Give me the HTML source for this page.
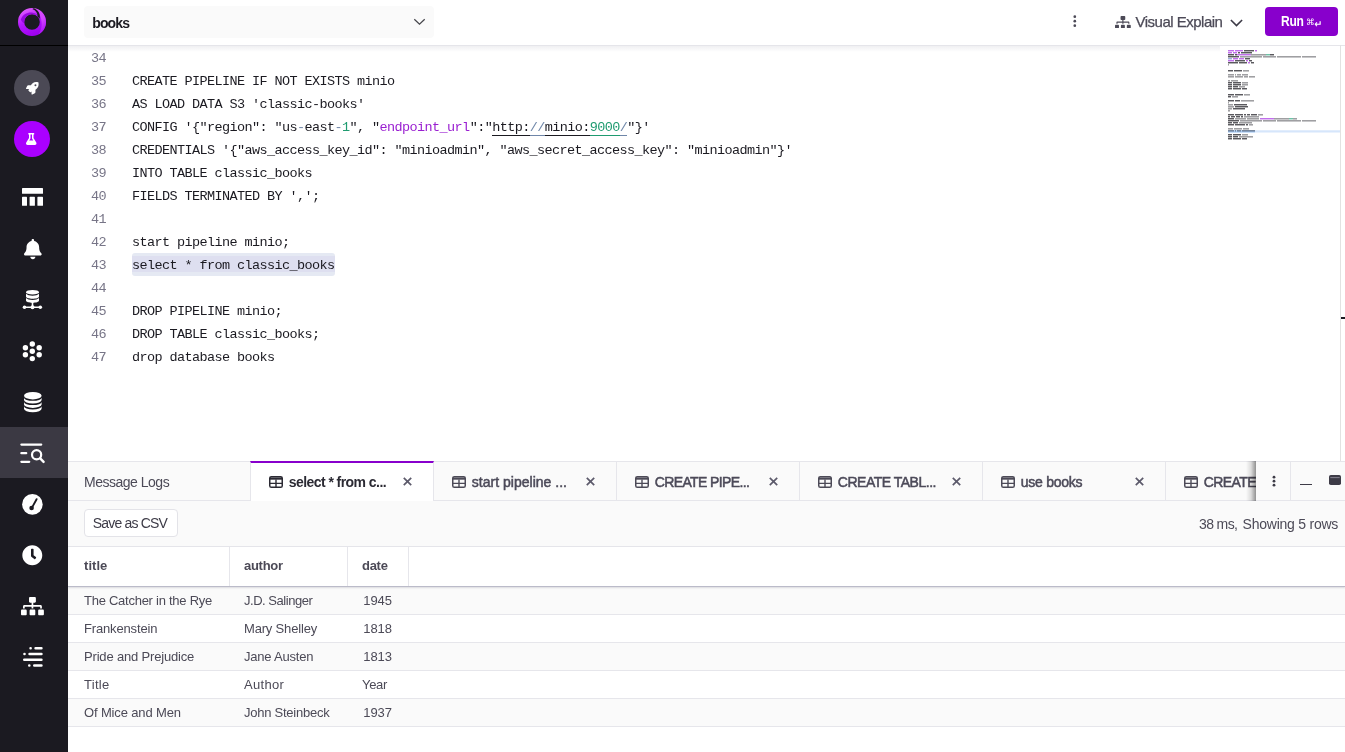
<!DOCTYPE html>
<html lang="en">
<head>
<meta charset="utf-8">
<title>SQL Editor</title>
<style>
*{box-sizing:border-box;margin:0;padding:0}
html,body{width:1345px;height:752px;overflow:hidden;background:#fff}
body{font-family:"Liberation Sans",sans-serif;font-size:14px;color:#4c4a57;position:relative}
.abs{position:absolute}
/* sidebar */
#side{will-change:transform;position:absolute;left:0;top:0;width:68px;height:752px;background:#1b1a21}
#side .logo{position:absolute;left:0;top:0;width:68px;height:46px;border-bottom:1px solid #000}
#side .circ{position:absolute;left:14px;width:36px;height:36px;border-radius:50%}
#side .act{position:absolute;left:0;top:427px;width:68px;height:51px;background:#3b3943}
#side svg{position:absolute;overflow:visible}
/* topbar */
#top{will-change:transform;position:absolute;left:68px;top:0;width:1277px;height:45px;background:#fff;z-index:5}
#sel{position:absolute;left:16px;top:6px;width:350px;height:32px;background:#fafafa;border-radius:4px}
#sel span{position:absolute;left:8.3px;top:.7px;line-height:32px;font-weight:bold;color:#1b1a21;font-size:14px;letter-spacing:-.89px}
#run{position:absolute;left:1197px;top:7px;width:73px;height:29px;background:#8800cc;border-radius:4px;color:#fff}
/* editor */
#ed{will-change:transform;position:absolute;left:68px;top:45px;width:1277px;height:416px;background:#fff;font-family:"Liberation Mono",monospace;font-size:13.5px;letter-spacing:-.6px;color:#1b1a21}
.ln{position:absolute;left:0;height:23px;line-height:23px;white-space:pre}
.ln i{position:absolute;left:23px;width:15px;text-align:right;font-style:normal;color:#777587}
.ln b{position:absolute;left:64px;font-weight:normal}
.ln s{text-decoration:none}
.hl{position:absolute;left:64px;top:208px;width:203px;height:23px;background:#e5e9f3;border-radius:3px}
.hl:after{content:"";position:absolute;left:0;top:3px;width:203px;height:16px;background:#dedff0}
.pu{color:#9a1fd1}.gr{color:#1f9b70}.bl{color:#6f86a8}
u{text-decoration:none;border-bottom:1px solid currentColor}
/* bottom */
#bot{will-change:transform;position:absolute;left:68px;top:461px;width:1277px;height:291px;background:#fff}
#tabs{position:absolute;left:0;top:0;width:1277px;height:40px;background:#fafafa;border-top:1px solid #e6e6eb;border-bottom:1px solid #e6e6eb}
.tab{position:absolute;top:0;height:38px;line-height:38px;border-right:1px solid #e6e6eb;white-space:nowrap;color:#4c4a57}
.tab .tt{color:#4c4a59;-webkit-text-stroke:.5px #4c4a59}
.tab.on{background:#fff;height:40px;top:-1px;border-top:2px solid #8800cc;border-left:1px solid #e6e6eb;color:#2b2a33}
.tab.on>*{margin-top:-1px}
.tab.on .tt{color:#2b2a33;font-weight:bold;-webkit-text-stroke:0}
#tool{position:absolute;left:0;top:40px;width:1277px;height:46px;background:#fafafa;border-bottom:1px solid #e6e6eb}
#csv{position:absolute;left:15.6px;top:8.3px;width:94.2px;height:27.4px;text-indent:-1.4px;border:1px solid #e3e3e8;border-radius:4px;background:#fff;line-height:26px;text-align:center;color:#3d3b47;letter-spacing:-.815px}
#hdr{position:absolute;left:0;top:86px;width:1277px;height:40px;background:#fff;border-bottom:1px solid #bbbbc9;box-shadow:0 1px 1.5px rgba(60,60,90,.16);z-index:2}
#hdr span{position:absolute;top:0;line-height:38px;font-weight:bold;color:#4c4a57;font-size:13px}
#hdr em{position:absolute;top:0;width:1px;height:39px;background:#e6e6eb}
.row{position:absolute;left:0;width:1277px;height:28px;border-bottom:1px solid #e6e6eb;line-height:27px;font-size:13px;color:#4c4a57}
.row.odd{background:#fafafa}
.row span{position:absolute;top:0;white-space:nowrap}
.ti{position:absolute;left:17.7px;top:13.5px;width:14px;height:12px}
.tt{position:absolute;left:37.7px;top:.8px}
.tx{position:absolute;left:151.500px;top:15.300px;width:9px;height:9px}
#tend{position:absolute;left:1188px;top:0;width:90px;height:38px;background:#fafafa}
#tsh{position:absolute;left:1178px;top:-1px;width:10px;height:40px;background:linear-gradient(90deg,rgba(0,0,0,0),rgba(0,0,0,.12) 50%,rgba(0,0,0,.42))}
.st{position:absolute;top:.5px;line-height:45px;color:#4c4a57;white-space:pre}
#vex{-webkit-text-stroke:.25px #4c4a57;position:absolute;left:1067.500px;top:0;line-height:43px;font-size:15px;letter-spacing:-.5px;color:#4c4a57;white-space:nowrap}
#run span{position:absolute;white-space:nowrap}
#run .r1{left:15.700px;top:-.4px;line-height:28px;font-weight:bold;font-size:14px;letter-spacing:-.3px;transform:scaleX(.86);transform-origin:0 50%}
#run .r2{left:41px;top:.7px;line-height:29px;font-family:"DejaVu Sans",sans-serif;font-size:8.500px}
#run .r3{left:49.500px;top:2px;line-height:29px;font-family:"DejaVu Sans",sans-serif;font-size:9.500px;font-weight:bold}
#sh1{position:absolute;left:0;top:0;width:1277px;height:1px;background:#e5e5ea}
#sh2{position:absolute;left:0;top:1px;width:1152px;height:6px;background:linear-gradient(rgba(30,30,60,.066),rgba(30,30,60,0))}
#vr{position:absolute;z-index:6;left:1272px;top:0;width:1px;height:416px;background:#e2e2e2}
#vm{position:absolute;left:1273px;top:272px;width:4px;height:2px;background:#1b1a21}
</style>
</head>
<body>
<svg width="0" height="0" style="position:absolute"><defs>
<g id="tbl"><rect x=".75" y=".75" width="12.5" height="10.5" rx="1.6" fill="none" stroke="currentColor" stroke-width="1.5"/><path d="M.75 1.5h12.5v2.2H.75z" fill="currentColor"/><path d="M.75 7.4h12.5M7 3.5v7.8" stroke="currentColor" stroke-width="1.4" fill="none"/></g>
<g id="xx"><path d="M.7.7l6.6 6.6M7.3.7L.7 7.3" stroke="#5c5a6b" stroke-width="1.5" fill="none"/></g>
</defs></svg>
<div id="side">
  <div class="logo"></div>
  <svg style="left:12px;top:2px" width="40" height="40" viewBox="0 0 40 40">
    <defs>
      <linearGradient id="lg1" x1="0.15" y1="0.1" x2="0.55" y2="1"><stop offset="0" stop-color="#e05cff"/><stop offset=".45" stop-color="#b417ff"/><stop offset="1" stop-color="#9d00ee"/></linearGradient>
      <linearGradient id="lg2" x1="0.3" y1="0" x2="0.7" y2="1"><stop offset="0" stop-color="#dc50ff"/><stop offset=".5" stop-color="#d64bff"/><stop offset="1" stop-color="#a80af5"/></linearGradient>
    </defs>
    <path fill-rule="evenodd" fill="url(#lg1)" d="M20 6a14 14 0 1 0 0 28a14 14 0 1 0 0-28zM20 12.200a7.800 7.800 0 1 1 0 15.600a7.800 7.800 0 1 1 0-15.600z"/>
    <path fill="url(#lg2)" d="M22.6 6.2C29.2 7.4 34 13.100 34 20c0 5.500-3.100 10.200-7.700 12.500c2.400-2.600 3.400-6.200 3.400-10.500c0-6.500-2.500-12.200-7.100-15.800z" opacity=".9"/>
    <path fill="#8f00dc" d="M8.800 17.800C10.500 12.600 15.200 10.100 20.800 10.700c2.700.3 5 1.700 6.300 4.100c-2-2-4.300-2.600-7.100-2.500c-4.300.1-7.500 3.300-7.700 7.700c-.1 2-1.800.7-3.500-2.200z" opacity=".85"/>
    <path fill="#1b1a21" d="M21.600 6.200C25.800 7.400 28.700 11.400 27.700 16.800L25.600 14.600C25.500 11.200 23.900 8.600 20.400 7.100z"/>
  </svg>
  <div class="circ" style="top:70px;background:#4b4955"></div>
  <svg style="left:26px;top:82px" width="12.6" height="12.6" viewBox="0 0 512 512" fill="#fff"><path d="M505.12019,19.09375c-1.18945-5.53125-6.65819-11-12.207-12.1875C460.716,0,435.507,0,410.40747,0,307.17523,0,245.26909,55.20312,199.05238,128H94.83772c-16.34763.01562-35.55658,11.875-42.88664,26.48438L2.51562,253.29688A28.4,28.4,0,0,0,0,264a24.00867,24.00867,0,0,0,24.00582,24H127.81618l-22.47457,22.46875c-11.36521,11.36133-12.99607,32.25781,0,45.25L156.24582,406.625c11.15623,11.1875,32.15619,13.15625,45.27726,0l22.47457-22.46875V488a24.00867,24.00867,0,0,0,24.00581,24,28.55934,28.55934,0,0,0,10.707-2.51562l98.72834-49.39063c14.62888-7.29687,26.50776-26.5,26.50776-42.85937V312.79688c72.59753-46.3125,128.03493-108.40626,128.03493-211.09376C512.07526,76.5,512.07526,51.29688,505.12019,19.09375ZM384.04033,168A40,40,0,1,1,424.05,128,40.02322,40.02322,0,0,1,384.04033,168Z"/></svg>
  <div class="circ" style="top:121px;background:#aa00ff"></div>
  <svg style="left:26.3px;top:133px" width="10.5" height="12" viewBox="0 0 448 512" fill="#fff"><path d="M437.2 403.5L320 215V64h8c13.3 0 24-10.7 24-24V24c0-13.3-10.7-24-24-24H120c-13.3 0-24 10.7-24 24v16c0 13.3 10.7 24 24 24h8v151L10.8 403.5C-18.5 450.6 15.3 512 70.9 512h306.2c55.7 0 89.4-61.5 60.1-108.5zM137.9 320l48.2-77.6c3.700-5.200 5.800-11.600 5.800-18.400V64h64v160c0 6.900 2.200 13.200 5.800 18.400l48.200 77.600h-172z"/></svg>
  <svg style="left:22.400px;top:188px" width="21" height="18" viewBox="0 0 21 18" fill="#fff"><rect x="0" y="0" width="21" height="5.800" rx=".6"/><rect x="0" y="8.800" width="5" height="9" rx=".6"/><rect x="7.600" y="8.800" width="5.300" height="9" rx=".6"/><rect x="15.400" y="8.800" width="5.600" height="9" rx=".6"/></svg>
  <svg style="left:23.700px;top:238.800px" width="17.700" height="20.200" viewBox="0 0 448 512" fill="#fff"><path d="M224 512c35.320 0 63.970-28.650 63.970-64H160.030c0 35.350 28.650 64 63.970 64zm215.390-149.710c-19.320-20.760-55.470-51.990-55.470-154.290 0-77.700-54.480-139.900-127.940-155.160V32c0-17.670-14.320-32-31.980-32s-31.980 14.330-31.980 32v20.840C118.560 68.100 64.080 130.300 64.080 208c0 102.300-36.150 133.530-55.470 154.290-6 6.450-8.660 14.160-8.610 21.710.110 16.400 12.980 32 32.100 32h383.800c19.120 0 32-15.600 32.100-32 .050-7.550-2.610-15.270-8.610-21.710z"/></svg>
  <svg style="left:22px;top:289px" width="21" height="22" viewBox="0 0 21 22" fill="#fff">
    <ellipse cx="10.500" cy="3.200" rx="6.500" ry="2.300"/>
    <path d="M4 4.800c1.200 1.300 3.600 1.900 6.500 1.900s5.300-.6 6.500-1.900v2.600c0 1.300-2.900 2.300-6.500 2.300S4 8.700 4 7.400z"/>
    <path d="M4 9c1.200 1.300 3.600 1.900 6.500 1.900S15.800 10.300 17 9v2.600c0 1.300-2.900 2.300-6.500 2.300S4 12.900 4 11.600z"/>
    <rect x="9.700" y="13" width="1.600" height="4"/><rect x="2.500" y="17.500" width="16" height="1.500"/>
    <circle cx="2.500" cy="18.300" r="1.800"/><circle cx="10.500" cy="18.300" r="2"/><circle cx="18.300" cy="18.300" r="1.800"/>
  </svg>
  <svg style="left:22px;top:341px" width="20.600" height="20.600" viewBox="-10.300 -10.300 20.600 20.600" fill="#fff">
    <circle r="2.700"/><circle cy="-7.300" r="2.700"/><circle cy="7.300" r="2.700"/><circle cx="6.900" cy="-3.500" r="2.700"/><circle cx="6.900" cy="3.500" r="2.700"/><circle cx="-6.900" cy="-3.500" r="2.700"/><circle cx="-6.900" cy="3.500" r="2.700"/>
  </svg>
  <svg style="left:23.700px;top:391.700px" width="17.600" height="20.600" viewBox="0 0 17.600 20.600" fill="#fff"><ellipse cx="8.800" cy="3.700" rx="8.800" ry="3.700"/><path d="M0 5.700A8.800 3.100 0 0 0 17.600 5.700V8.100A8.800 3.500 0 0 1 0 8.100z"/><path d="M0 10A8.800 3.100 0 0 0 17.600 10V12.400A8.800 3.500 0 0 1 0 12.400z"/><path d="M0 14.300A8.800 3.100 0 0 0 17.600 14.300V16.700A8.800 3.500 0 0 1 0 16.700z"/></svg>
  <div class="act"></div>
  <svg style="left:20px;top:443px" width="25" height="21" viewBox="0 0 25 21" fill="none" stroke="#fff" stroke-width="2.300" stroke-linecap="round">
    <path d="M1.400 1.600H21.200M1.400 10.200H6.200M1.400 18.800H9.200"/><circle cx="16.600" cy="11.800" r="4.600" stroke-width="2.200"/><path d="M20.200 15.400L23.600 18.900" stroke-width="2.400"/>
  </svg>
  <svg style="left:22px;top:493.700px" width="20.800" height="20.800" viewBox="0 0 20.800 20.800"><circle cx="10.400" cy="10.400" r="10.300" fill="#fff"/><path d="M14.600 5.200L10 13.600" stroke="#1b1a21" stroke-width="1.900" stroke-linecap="round"/><circle cx="9.600" cy="14" r="2.300" fill="#1b1a21"/></svg>
  <svg style="left:22.100px;top:544.700px" width="20.600" height="20.600" viewBox="0 0 512 512" fill="#fff"><path d="M256,8C119,8,8,119,8,256S119,504,256,504,504,393,504,256,393,8,256,8Zm92.490,313h0l-20,25a16,16,0,0,1-22.490,2.500h0l-67-49.720a40,40,0,0,1-15-31.230V112a16,16,0,0,1,16-16h32a16,16,0,0,1,16,16V256l58,42.500A16,16,0,0,1,348.490,321Z"/></svg>
  <svg style="left:21px;top:597px" width="22.900" height="18.300" viewBox="0 0 640 512" fill="#fff"><path d="M128 352H32c-17.670 0-32 14.330-32 32v96c0 17.670 14.330 32 32 32h96c17.670 0 32-14.330 32-32v-96c0-17.670-14.330-32-32-32zm-24-80h192v48h48v-48h192v48h48v-57.590c0-21.170-17.230-38.410-38.410-38.410H344v-64h40c17.670 0 32-14.330 32-32V32c0-17.670-14.330-32-32-32H256c-17.670 0-32 14.330-32 32v96c0 17.670 14.330 32 32 32h40v64H94.410C73.230 224 56 241.230 56 262.410V320h48v-48zm264 80h-96c-17.670 0-32 14.330-32 32v96c0 17.670 14.330 32 32 32h96c17.670 0 32-14.330 32-32v-96c0-17.670-14.330-32-32-32zm240 0h-96c-17.670 0-32 14.330-32 32v96c0 17.670 14.330 32 32 32h96c17.670 0 32-14.330 32-32v-96c0-17.670-14.330-32-32-32z"/></svg>
  <svg style="left:22px;top:646px" width="21" height="22" viewBox="0 0 21 22" fill="none" stroke="#fff" stroke-width="2.600" stroke-linecap="round">
    <path d="M8.600 2.300h.01M13.600 2.300H19.400M2.500 8h.01M7.600 8H19.400M2.300 13.800H19.400M7.300 19.500h.01M12.300 19.500H19.400"/>
  </svg>
</div>

<div id="top">
  <div id="sel"><span>books</span><svg style="position:absolute;left:329px;top:11.500px" width="13" height="8" viewBox="0 0 13 8"><path d="M1.300 1.200L6.500 6.200L11.700 1.200" fill="none" stroke="#46464c" stroke-width="1.250"/></svg></div>
  <svg style="position:absolute;left:1005px;top:15px" width="4" height="13" viewBox="0 0 4 13" fill="#4c4a57"><circle cx="1.800" cy="1.700" r="1.350"/><circle cx="1.800" cy="6.200" r="1.350"/><circle cx="1.800" cy="10.700" r="1.350"/></svg>
  <svg style="position:absolute;left:1046.800px;top:15.800px" width="15.800" height="12.600" viewBox="0 0 640 512" fill="#4c4a57"><path d="M128 352H32c-17.670 0-32 14.330-32 32v96c0 17.670 14.330 32 32 32h96c17.670 0 32-14.330 32-32v-96c0-17.670-14.330-32-32-32zm-24-80h192v48h48v-48h192v48h48v-57.590c0-21.170-17.230-38.410-38.410-38.410H344v-64h40c17.670 0 32-14.330 32-32V32c0-17.670-14.330-32-32-32H256c-17.670 0-32 14.330-32 32v96c0 17.670 14.330 32 32 32h40v64H94.410C73.230 224 56 241.230 56 262.410V320h48v-48zm264 80h-96c-17.670 0-32 14.330-32 32v96c0 17.670 14.330 32 32 32h96c17.670 0 32-14.330 32-32v-96c0-17.670-14.330-32-32-32zm240 0h-96c-17.670 0-32 14.330-32 32v96c0 17.670 14.330 32 32 32h96c17.670 0 32-14.330 32-32v-96c0-17.670-14.330-32-32-32z"/></svg>
  <span id="vex">Visual Explain</span>
  <svg style="position:absolute;left:1161.500px;top:19px" width="13" height="8" viewBox="0 0 13 8"><path d="M.900 1L6.500 6.600L12.100 1" fill="none" stroke="#3d3b47" stroke-width="1.600"/></svg>
  <div id="run"><span class="r1">Run</span><span class="r2">&#8984;</span><span class="r3">&#8629;</span></div>
</div>

<div id="ed">
<svg id="mm" style="position:absolute;left:1160px;top:0;z-index:7" width="112" height="120" viewBox="0 0 112 120">
<rect x="0" y="85.300" width="112" height="2.200" fill="#d6e6fb"/><rect x="0" y="85.300" width="27" height="2.200" fill="#a9cbf3"/>
<rect x="0" y="5.1" width="6" height="1.300" fill="#a22be0" opacity="0.75"/>
<rect x="7" y="5.1" width="8" height="1.300" fill="#a22be0" opacity="0.75"/>
<rect x="16" y="5.1" width="10" height="1.300" fill="#1b1a21" opacity="0.8"/>
<rect x="27" y="5.1" width="2" height="1.300" fill="#a22be0" opacity="0.75"/>
<rect x="0" y="7.1" width="4" height="1.300" fill="#a22be0" opacity="0.75"/>
<rect x="5" y="7.1" width="4" height="1.300" fill="#a22be0" opacity="0.75"/>
<rect x="10" y="7.1" width="2" height="1.300" fill="#1b1a21" opacity="0.8"/>
<rect x="13" y="7.1" width="11" height="1.300" fill="#1b1a21" opacity="0.8"/>
<rect x="0" y="9.1" width="6" height="1.300" fill="#1b1a21" opacity="0.8"/>
<rect x="7" y="9.1" width="2" height="1.300" fill="#1b1a21" opacity="0.8"/>
<rect x="9" y="9.1" width="14" height="1.300" fill="#a22be0" opacity="0.75"/>
<rect x="23" y="9.3" width="1" height="1.100" fill="#1b1a21" opacity=".600"/>
<rect x="24" y="9.3" width="14" height="1.100" fill="#1b1a21" opacity=".600"/>
<rect x="38" y="9.1" width="4" height="1.300" fill="#2aa57c" opacity="0.75"/>
<rect x="42" y="9.1" width="4" height="1.300" fill="#1b1a21" opacity="0.8"/>
<rect x="0" y="11.1" width="11" height="1.300" fill="#1b1a21" opacity="0.8"/>
<rect x="12" y="11.3" width="22" height="1.100" fill="#1b1a21" opacity=".600"/>
<rect x="35" y="11.3" width="13" height="1.100" fill="#1b1a21" opacity=".600"/>
<rect x="49" y="11.3" width="24" height="1.100" fill="#1b1a21" opacity=".600"/>
<rect x="74" y="11.3" width="14" height="1.100" fill="#1b1a21" opacity=".600"/>
<rect x="0" y="13.1" width="4" height="1.300" fill="#6f86c8" opacity="0.75"/>
<rect x="5" y="13.1" width="5" height="1.300" fill="#a22be0" opacity="0.75"/>
<rect x="11" y="13.1" width="5" height="1.300" fill="#a22be0" opacity="0.75"/>
<rect x="17" y="13.1" width="5" height="1.300" fill="#1b1a21" opacity="0.8"/>
<rect x="0" y="15.1" width="6" height="1.300" fill="#a22be0" opacity="0.75"/>
<rect x="7" y="15.1" width="10" height="1.300" fill="#1b1a21" opacity="0.8"/>
<rect x="18" y="15.1" width="2" height="1.300" fill="#a22be0" opacity="0.75"/>
<rect x="21" y="15.1" width="3" height="1.300" fill="#1b1a21" opacity="0.8"/>
<rect x="0" y="17.1" width="10" height="1.300" fill="#1b1a21" opacity="0.8"/>
<rect x="11" y="17.1" width="8" height="1.300" fill="#1b1a21" opacity="0.8"/>
<rect x="20" y="17.1" width="2" height="1.300" fill="#a22be0" opacity="0.75"/>
<rect x="23" y="17.1" width="3" height="1.300" fill="#1b1a21" opacity="0.8"/>
<rect x="0" y="19.3" width="1" height="1.100" fill="#1b1a21" opacity=".600"/>
<rect x="0" y="25.1" width="5" height="1.300" fill="#1b1a21" opacity="0.8"/>
<rect x="6" y="25.1" width="8" height="1.300" fill="#1b1a21" opacity="0.8"/>
<rect x="15" y="25.3" width="6" height="1.100" fill="#1b1a21" opacity=".600"/>
<rect x="0" y="29.3" width="6" height="1.100" fill="#1b1a21" opacity=".600"/>
<rect x="7" y="29.3" width="1" height="1.100" fill="#1b1a21" opacity=".600"/>
<rect x="9" y="29.3" width="4" height="1.100" fill="#1b1a21" opacity=".600"/>
<rect x="14" y="29.3" width="6" height="1.100" fill="#1b1a21" opacity=".600"/>
<rect x="0" y="31.3" width="6" height="1.100" fill="#1b1a21" opacity=".600"/>
<rect x="7" y="31.3" width="8" height="1.100" fill="#1b1a21" opacity=".600"/>
<rect x="16" y="31.3" width="4" height="1.100" fill="#1b1a21" opacity=".600"/>
<rect x="21" y="31.3" width="6" height="1.100" fill="#1b1a21" opacity=".600"/>
<rect x="0" y="35.3" width="2" height="1.100" fill="#1b1a21" opacity=".600"/>
<rect x="3" y="35.3" width="7" height="1.100" fill="#1b1a21" opacity=".600"/>
<rect x="0" y="37.1" width="4" height="1.300" fill="#1b1a21" opacity="0.8"/>
<rect x="5" y="37.1" width="8" height="1.300" fill="#1b1a21" opacity="0.8"/>
<rect x="14" y="37.3" width="6" height="1.100" fill="#1b1a21" opacity=".600"/>
<rect x="0" y="39.1" width="4" height="1.300" fill="#1b1a21" opacity="0.8"/>
<rect x="5" y="39.1" width="8" height="1.300" fill="#1b1a21" opacity="0.8"/>
<rect x="14" y="39.3" width="6" height="1.100" fill="#1b1a21" opacity=".600"/>
<rect x="0" y="41.1" width="4" height="1.300" fill="#1b1a21" opacity="0.8"/>
<rect x="5" y="41.1" width="5" height="1.300" fill="#1b1a21" opacity="0.8"/>
<rect x="11" y="41.3" width="6" height="1.100" fill="#1b1a21" opacity=".600"/>
<rect x="0" y="43.1" width="4" height="1.300" fill="#1b1a21" opacity="0.8"/>
<rect x="5" y="43.1" width="8" height="1.300" fill="#1b1a21" opacity="0.8"/>
<rect x="14" y="43.1" width="5" height="1.300" fill="#1b1a21" opacity="0.8"/>
<rect x="0" y="49.1" width="6" height="1.300" fill="#1b1a21" opacity="0.8"/>
<rect x="7" y="49.1" width="8" height="1.300" fill="#1b1a21" opacity="0.8"/>
<rect x="16" y="49.3" width="6" height="1.100" fill="#1b1a21" opacity=".600"/>
<rect x="0" y="51.1" width="3" height="1.300" fill="#1b1a21" opacity="0.8"/>
<rect x="4" y="51.3" width="6" height="1.100" fill="#1b1a21" opacity=".600"/>
<rect x="0" y="55.1" width="6" height="1.300" fill="#1b1a21" opacity="0.8"/>
<rect x="7" y="55.1" width="5" height="1.300" fill="#1b1a21" opacity="0.8"/>
<rect x="13" y="55.3" width="13" height="1.100" fill="#1b1a21" opacity=".600"/>
<rect x="0" y="57.3" width="1" height="1.100" fill="#1b1a21" opacity=".600"/>
<rect x="0" y="59.3" width="5" height="1.100" fill="#1b1a21" opacity=".600"/>
<rect x="6" y="59.1" width="13" height="1.300" fill="#1b1a21" opacity="0.8"/>
<rect x="0" y="61.3" width="6" height="1.100" fill="#1b1a21" opacity=".600"/>
<rect x="7" y="61.1" width="13" height="1.300" fill="#1b1a21" opacity="0.8"/>
<rect x="0" y="63.3" width="4" height="1.100" fill="#1b1a21" opacity=".600"/>
<rect x="5" y="63.1" width="12" height="1.300" fill="#1b1a21" opacity="0.8"/>
<rect x="0" y="65.3" width="2" height="1.100" fill="#1b1a21" opacity=".600"/>
<rect x="0" y="69.1" width="6" height="1.300" fill="#1b1a21" opacity="0.8"/>
<rect x="7" y="69.1" width="8" height="1.300" fill="#1b1a21" opacity="0.8"/>
<rect x="16" y="69.1" width="2" height="1.300" fill="#1b1a21" opacity="0.8"/>
<rect x="19" y="69.1" width="3" height="1.300" fill="#1b1a21" opacity="0.8"/>
<rect x="23" y="69.1" width="6" height="1.300" fill="#1b1a21" opacity="0.8"/>
<rect x="30" y="69.3" width="5" height="1.100" fill="#1b1a21" opacity=".600"/>
<rect x="0" y="71.1" width="2" height="1.300" fill="#1b1a21" opacity="0.8"/>
<rect x="3" y="71.1" width="4" height="1.300" fill="#1b1a21" opacity="0.8"/>
<rect x="8" y="71.1" width="4" height="1.300" fill="#1b1a21" opacity="0.8"/>
<rect x="13" y="71.1" width="2" height="1.300" fill="#1b1a21" opacity="0.8"/>
<rect x="16" y="71.3" width="15" height="1.100" fill="#1b1a21" opacity=".600"/>
<rect x="0" y="73.1" width="6" height="1.300" fill="#1b1a21" opacity="0.8"/>
<rect x="7" y="73.3" width="11" height="1.100" fill="#1b1a21" opacity=".600"/>
<rect x="19" y="73.3" width="12" height="1.100" fill="#1b1a21" opacity=".600"/>
<rect x="32" y="73.1" width="14" height="1.300" fill="#a22be0" opacity="0.75"/>
<rect x="46" y="73.3" width="15" height="1.100" fill="#1b1a21" opacity=".600"/>
<rect x="61" y="73.1" width="4" height="1.300" fill="#2aa57c" opacity="0.75"/>
<rect x="65" y="73.3" width="4" height="1.100" fill="#1b1a21" opacity=".600"/>
<rect x="0" y="75.1" width="11" height="1.300" fill="#1b1a21" opacity="0.8"/>
<rect x="12" y="75.3" width="22" height="1.100" fill="#1b1a21" opacity=".600"/>
<rect x="35" y="75.3" width="13" height="1.100" fill="#1b1a21" opacity=".600"/>
<rect x="49" y="75.3" width="24" height="1.100" fill="#1b1a21" opacity=".600"/>
<rect x="74" y="75.3" width="14" height="1.100" fill="#1b1a21" opacity=".600"/>
<rect x="0" y="77.1" width="4" height="1.300" fill="#1b1a21" opacity="0.8"/>
<rect x="5" y="77.1" width="5" height="1.300" fill="#1b1a21" opacity="0.8"/>
<rect x="11" y="77.3" width="13" height="1.100" fill="#1b1a21" opacity=".600"/>
<rect x="0" y="79.1" width="6" height="1.300" fill="#1b1a21" opacity="0.8"/>
<rect x="7" y="79.1" width="10" height="1.300" fill="#1b1a21" opacity="0.8"/>
<rect x="18" y="79.1" width="2" height="1.300" fill="#1b1a21" opacity="0.8"/>
<rect x="21" y="79.3" width="4" height="1.100" fill="#1b1a21" opacity=".600"/>
<rect x="0" y="83.3" width="5" height="1.100" fill="#1b1a21" opacity=".600"/>
<rect x="6" y="83.3" width="8" height="1.100" fill="#1b1a21" opacity=".600"/>
<rect x="15" y="83.3" width="6" height="1.100" fill="#1b1a21" opacity=".600"/>
<rect x="0" y="85.3" width="6" height="1.100" fill="#1b1a21" opacity=".600"/>
<rect x="7" y="85.3" width="1" height="1.100" fill="#1b1a21" opacity=".600"/>
<rect x="9" y="85.3" width="4" height="1.100" fill="#1b1a21" opacity=".600"/>
<rect x="14" y="85.3" width="13" height="1.100" fill="#1b1a21" opacity=".600"/>
<rect x="0" y="89.1" width="4" height="1.300" fill="#1b1a21" opacity="0.8"/>
<rect x="5" y="89.1" width="8" height="1.300" fill="#1b1a21" opacity="0.8"/>
<rect x="14" y="89.3" width="6" height="1.100" fill="#1b1a21" opacity=".600"/>
<rect x="0" y="91.1" width="4" height="1.300" fill="#1b1a21" opacity="0.8"/>
<rect x="5" y="91.1" width="5" height="1.300" fill="#1b1a21" opacity="0.8"/>
<rect x="11" y="91.3" width="14" height="1.100" fill="#1b1a21" opacity=".600"/>
<rect x="0" y="93.1" width="4" height="1.300" fill="#1b1a21" opacity="0.8"/>
<rect x="5" y="93.1" width="8" height="1.300" fill="#1b1a21" opacity="0.8"/>
<rect x="14" y="93.1" width="5" height="1.300" fill="#1b1a21" opacity="0.8"/>
</svg>
<div id="sh1"></div><div id="sh2"></div><div id="vr"></div><div id="vm"></div>
<div class="hl"></div>
<div class="ln" style="top:2px"><i>34</i><b></b></div>
<div class="ln" style="top:25px"><i>35</i><b>CREATE PIPELINE IF NOT EXISTS minio</b></div>
<div class="ln" style="top:48px"><i>36</i><b>AS LOAD DATA S3 'classic-books'</b></div>
<div class="ln" style="top:71px"><i>37</i><b>CONFIG '{"region": "us<s class=bl>-</s>east<s class=bl>-</s><s class=gr>1</s>", "<s class=pu>endpoint_url</s>":"<u>http:</u><u class=bl>//</u><u>minio:</u><u class=gr>9000</u><u class=bl>/</u>"}'</b></div>
<div class="ln" style="top:94px"><i>38</i><b>CREDENTIALS '{"aws_access_key_id": "minioadmin", "aws_secret_access_key": "minioadmin"}'</b></div>
<div class="ln" style="top:117px"><i>39</i><b>INTO TABLE classic_books</b></div>
<div class="ln" style="top:140px"><i>40</i><b>FIELDS TERMINATED BY ',';</b></div>
<div class="ln" style="top:163px"><i>41</i><b></b></div>
<div class="ln" style="top:186px"><i>42</i><b>start pipeline minio;</b></div>
<div class="ln" style="top:209px"><i>43</i><b>select * from classic_books</b></div>
<div class="ln" style="top:232px"><i>44</i><b></b></div>
<div class="ln" style="top:255px"><i>45</i><b>DROP PIPELINE minio;</b></div>
<div class="ln" style="top:278px"><i>46</i><b>DROP TABLE classic_books;</b></div>
<div class="ln" style="top:301px"><i>47</i><b>drop database books</b></div>
</div>

<div id="bot">
  <div id="tabs">
    <div class="tab" style="left:0;width:183px"><span style="position:absolute;left:16px;top:.8px;letter-spacing:-.49px">Message Logs</span></div>
    <div class="tab on" style="left:182px;width:184px"><svg class="ti" viewBox="0 0 14 12"><use href="#tbl"/></svg><span class="tt" style="letter-spacing:-.555px">select * from c...</span><svg class="tx" viewBox="0 0 8 8"><use href="#xx"/></svg></div>
    <div class="tab" style="left:366.1px;width:183px"><svg class="ti" viewBox="0 0 14 12"><use href="#tbl"/></svg><span class="tt" style="letter-spacing:.015px">start pipeline ...</span><svg class="tx" viewBox="0 0 8 8"><use href="#xx"/></svg></div>
    <div class="tab" style="left:549.1px;width:183px"><svg class="ti" viewBox="0 0 14 12"><use href="#tbl"/></svg><span class="tt" style="letter-spacing:-.63px">CREATE PIPE...</span><svg class="tx" viewBox="0 0 8 8"><use href="#xx"/></svg></div>
    <div class="tab" style="left:732.1px;width:183px"><svg class="ti" viewBox="0 0 14 12"><use href="#tbl"/></svg><span class="tt" style="letter-spacing:-.488px">CREATE TABL...</span><svg class="tx" viewBox="0 0 8 8"><use href="#xx"/></svg></div>
    <div class="tab" style="left:915.1px;width:183px"><svg class="ti" viewBox="0 0 14 12"><use href="#tbl"/></svg><span class="tt" style="letter-spacing:-.248px">use books</span><svg class="tx" viewBox="0 0 8 8"><use href="#xx"/></svg></div>
    <div class="tab" style="left:1098.1px;width:183px;border-right:0"><svg class="ti" viewBox="0 0 14 12"><use href="#tbl"/></svg><span class="tt" style="letter-spacing:-.6px">CREATE DATA...</span></div>
    <div id="tsh"></div>
    <div id="tend">
      <svg style="position:absolute;left:15.500px;top:12.500px" width="4" height="13" viewBox="0 0 4 13" fill="#3d3b47"><circle cx="2" cy="2.200" r="1.400"/><circle cx="2" cy="6.200" r="1.400"/><circle cx="2" cy="10.200" r="1.400"/></svg>
      <div style="position:absolute;left:34px;top:0;width:1px;height:38px;background:#e6e6eb"></div>
      <div style="position:absolute;left:43.500px;top:21.500px;width:12px;height:1.400px;background:#3d3b47"></div>
      <svg style="position:absolute;left:72.500px;top:13px" width="12" height="10" viewBox="0 0 12 10"><rect x="0" y="0" width="12" height="10" rx="1.800" fill="#3d3b47"/><rect x="1.300" y="2.200" width="9.400" height=".9" fill="#8e8c99"/></svg>
    </div>
  </div>
  <div id="tool"><div id="csv">Save as CSV</div><span class="st" style="left:1131px;letter-spacing:-.62px">38 ms,</span><span class="st" style="left:1174.6px;letter-spacing:-.238px">Showing 5 rows</span></div>
  <div id="hdr"><span style="left:16px;letter-spacing:0.055px">title</span><em style="left:161px"></em><span style="left:176px;letter-spacing:-0.276px">author</span><em style="left:279px"></em><span style="left:294px;letter-spacing:-0.284px">date</span><em style="left:340px"></em></div>
  <div class="row odd" style="top:126px"><span style="left:16px;letter-spacing:-0.259px">The Catcher in the Rye</span><span style="left:176px;letter-spacing:-0.471px">J.D. Salinger</span><span style="left:295.2px;letter-spacing:-0.03px">1945</span></div>
  <div class="row" style="top:154px"><span style="left:16px;letter-spacing:-0.155px">Frankenstein</span><span style="left:176px;letter-spacing:-0.178px">Mary Shelley</span><span style="left:295.2px;letter-spacing:-0.03px">1818</span></div>
  <div class="row odd" style="top:182px"><span style="left:16px;letter-spacing:-0.177px">Pride and Prejudice</span><span style="left:176px;letter-spacing:-0.215px">Jane Austen</span><span style="left:295.2px;letter-spacing:-0.03px">1813</span></div>
  <div class="row" style="top:210px"><span style="left:16px;letter-spacing:0.304px">Title</span><span style="left:176px;letter-spacing:0.298px">Author</span><span style="left:294px;letter-spacing:-0.345px">Year</span></div>
  <div class="row odd" style="top:238px"><span style="left:16px;letter-spacing:-0.14px">Of Mice and Men</span><span style="left:176px;letter-spacing:-0.25px">John Steinbeck</span><span style="left:295.2px;letter-spacing:-0.03px">1937</span></div>
</div>
</body>
</html>
